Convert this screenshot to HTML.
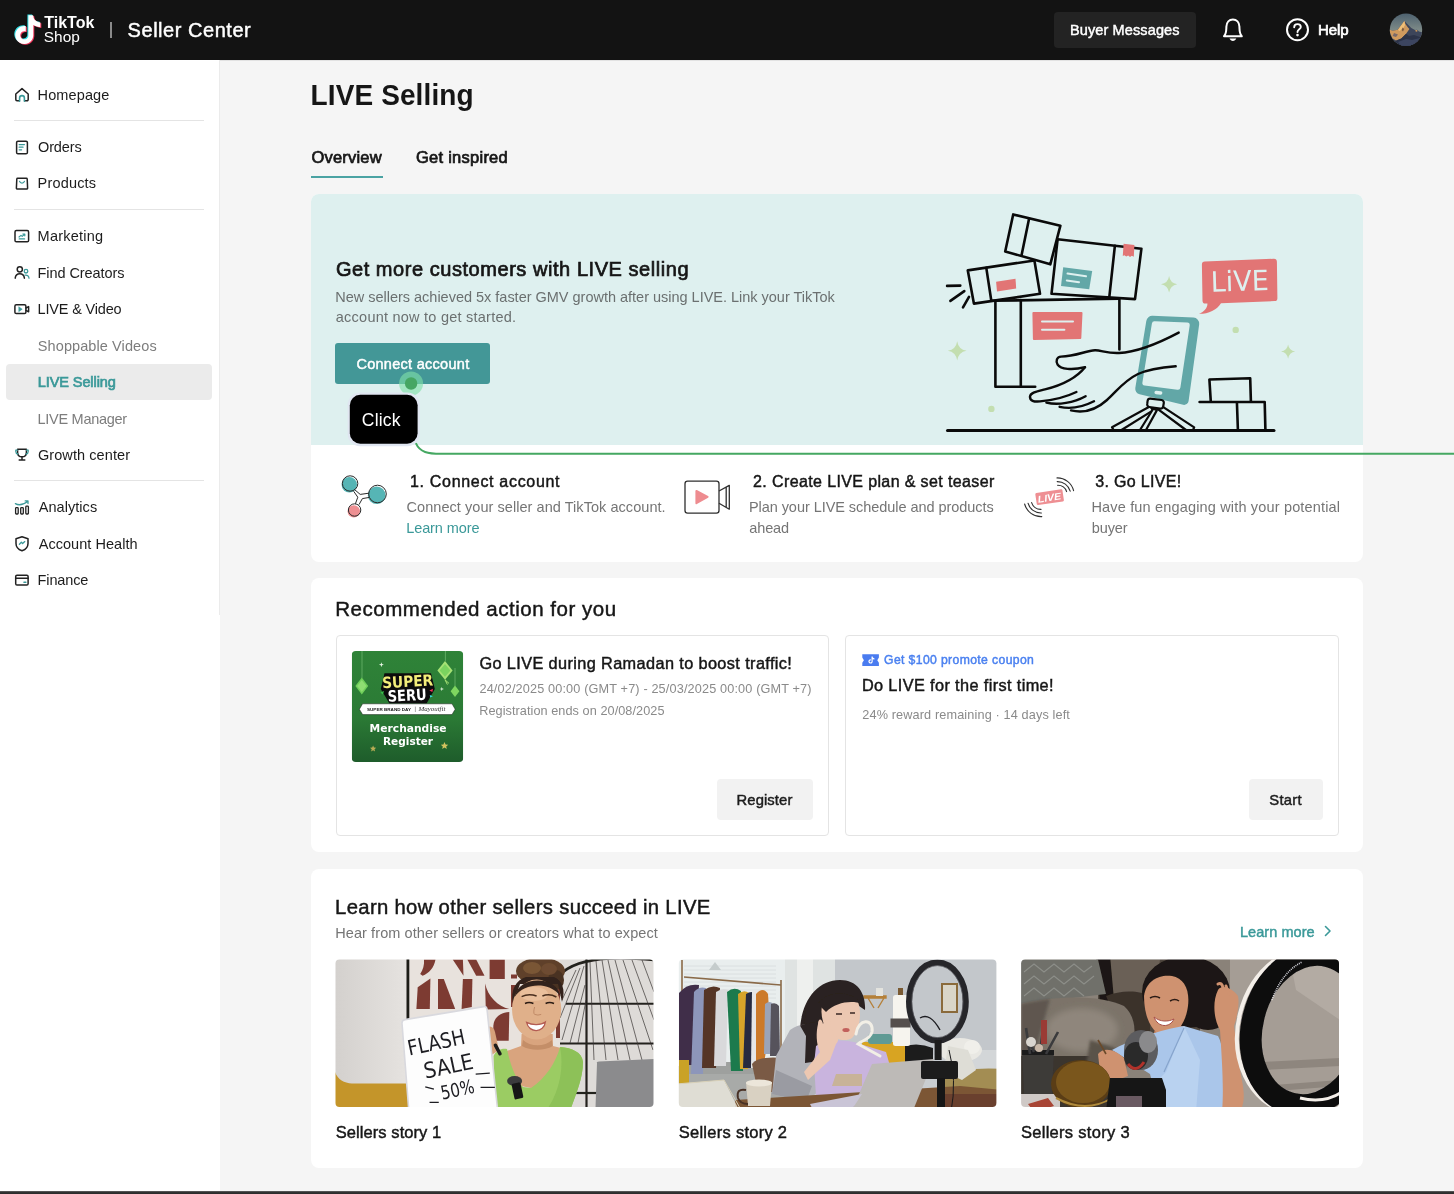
<!DOCTYPE html>
<html lang="en">
<head>
<meta charset="utf-8">
<title>LIVE Selling - Seller Center</title>
<style>
*{box-sizing:border-box;margin:0;padding:0}
html,body{width:1454px;height:1194px;overflow:hidden;background:#f5f5f5;font-family:"Liberation Sans",sans-serif;color:#161616}
body{position:relative}
.a{position:absolute}
.t{position:absolute;white-space:nowrap;line-height:20px}
#hdr{position:absolute;left:0;top:0;width:1454px;height:60px;background:#131313}
#side{position:absolute;left:0;top:60px;width:220px;height:1134px;background:#fff}
#sideb{position:absolute;left:219px;top:60px;width:1px;height:555px;background:#ebebeb}
.sep{position:absolute;left:14px;width:190px;height:1px;background:#e4e4e4}
.card{position:absolute;left:311px;width:1052px;background:#fff;border-radius:8px}
.inner{position:absolute;border:1px solid #e4e4e4;border-radius:4px;background:#fff}
.btn2{position:absolute;background:#f2f2f2;border-radius:4px}
svg{position:absolute;overflow:visible}
</style>
</head>
<body>
<div id="root" style="position:absolute;left:0;top:0;width:1454px;height:1194px;will-change:transform">
<!-- header -->
<div id="hdr"></div>
<div class="a" style="left:0;top:60px;width:1454px;height:1px;background:#e2e2e2"></div>
<div class="a" style="left:110px;top:22px;width:1.5px;height:16px;background:#8a8a8a"></div>
<div class="a" style="left:1054px;top:12px;width:142px;height:36px;background:#232323;border-radius:4px"></div>
<svg style="left:0;top:0" width="1454" height="60" viewBox="0 0 1454 60">
<defs>
<path id="tk" d="M12.525.02c1.31-.02 2.61-.01 3.91-.02.08 1.53.63 3.09 1.75 4.17 1.12 1.11 2.7 1.62 4.24 1.79v4.03c-1.44-.05-2.89-.35-4.2-.97-.57-.26-1.1-.59-1.62-.93-.01 2.92.01 5.84-.02 8.75-.08 1.4-.54 2.79-1.35 3.94-1.31 1.92-3.58 3.17-5.91 3.21-1.43.08-2.86-.31-4.08-1.03-2.02-1.19-3.44-3.37-3.65-5.71-.02-.5-.03-1-.01-1.49.18-1.9 1.12-3.72 2.58-4.96 1.66-1.44 3.98-2.13 6.15-1.72.02 1.48-.04 2.96-.04 4.44-.99-.32-2.15-.23-3.02.37-.63.41-1.11 1.04-1.36 1.75-.21.51-.15 1.07-.14 1.61.24 1.64 1.82 3.02 3.5 2.87 1.12-.01 2.19-.66 2.77-1.61.19-.33.4-.67.41-1.06.1-1.79.06-3.57.07-5.36.01-4.03-.01-8.05.02-12.07z"/>
<clipPath id="avc"><circle cx="1406" cy="29.8" r="16.2"/></clipPath>
<linearGradient id="sky" x1="0" y1="0" x2="0" y2="1"><stop offset="0" stop-color="#4c606e"/><stop offset="0.5" stop-color="#7d8a88"/><stop offset="1" stop-color="#8f9488"/></linearGradient>
</defs>
<!-- tiktok note -->
<g transform="translate(12.4,14.4) scale(1.2)"><use href="#tk" fill="#35e0e6"/></g>
<g transform="translate(14.4,16) scale(1.2)"><use href="#tk" fill="#f0355a"/></g>
<g transform="translate(13.4,15.2) scale(1.2)"><use href="#tk" fill="#fff"/></g>
<text x="44.3" y="28.3" font-family="Liberation Sans, sans-serif" font-weight="bold" font-size="15.6" fill="#fff" textLength="50" lengthAdjust="spacingAndGlyphs">TikTok</text>
<text x="43.8" y="42.2" font-family="Liberation Sans, sans-serif" font-size="15" fill="#fff" textLength="36" lengthAdjust="spacingAndGlyphs">Shop</text>
<!-- bell -->
<g fill="none" stroke="#fff" stroke-width="2" stroke-linejoin="round" stroke-linecap="round">
<path d="M1224 36.2 C1226.6 33.5 1226.2 30 1226.4 26.5 C1226.6 22.2 1229.2 19.5 1232.9 19.5 C1236.6 19.5 1239.2 22.2 1239.4 26.5 C1239.6 30 1239.2 33.5 1241.8 36.2 Z"/>
</g>
<path d="M1229.5 38.6 H1236.3 C1235.6 40.2 1234.4 40.9 1232.9 40.9 C1231.4 40.9 1230.2 40.2 1229.5 38.6 Z" fill="#fff"/>
<!-- help -->
<circle cx="1297.5" cy="29.7" r="10.5" fill="none" stroke="#fff" stroke-width="2"/>
<path d="M1294.2 27.2 C1294.2 25.2 1295.7 24.1 1297.5 24.1 C1299.3 24.1 1300.8 25.2 1300.8 27 C1300.8 29.3 1297.5 29.4 1297.5 32" fill="none" stroke="#fff" stroke-width="1.9" stroke-linecap="round"/>
<circle cx="1297.5" cy="35.1" r="1.3" fill="#fff"/>
<!-- avatar -->
<g clip-path="url(#avc)">
<rect x="1389" y="13" width="34" height="34" fill="url(#sky)"/>
<path d="M1389 31 L1390 29.7 L1392.8 30.8 L1397.6 29.7 L1404.4 21.1 L1411.3 27.9 L1415 30.1 L1417 29.8 L1419 31.4 L1423 32.6 V47 H1389 Z" fill="#3d455a"/>
<path d="M1404.4 21.1 L1405.4 24 L1408 27.6 L1409.4 29 L1406.1 33.8 L1401.3 38.6 L1396 40.4 L1392.5 38.6 L1390 33.1 L1389 31 L1390 29.7 L1392.8 30.8 L1397.6 29.7 Z" fill="#cf9a5e"/>
<path d="M1404.4 21.1 L1405 25 L1403 28.4 L1399.6 31 L1398 30 Z" fill="#f0c078"/>
<path d="M1394 33 L1398 34.4 L1396 37 L1392.6 36 Z" fill="#7a6a6a"/>
<path d="M1402.6 27.6 L1404.2 29 L1403 31.4 L1401.6 30 Z" fill="#7a5a40"/>
<path d="M1415.3 30.1 L1417.2 29.9 L1417.4 31.6 L1415.8 31.8 Z" fill="#c9955a"/>
<path d="M1395 41.2 L1401.3 38.6 L1406.1 33.8 L1409 36 L1414 35 L1423 38 V47 H1400 Z" fill="#2c3348"/>
<path d="M1398 42 L1406 39 L1412 40 L1420 38 L1423 40 V47 H1402 Z" fill="#3c4560"/>
</g>
</svg>

<!-- sidebar -->
<div id="side"></div>
<div id="sideb"></div>
<div class="a" style="left:6px;top:364px;width:206px;height:36px;background:#ebebeb;border-radius:4px"></div>
<div class="sep" style="top:120px"></div>
<div class="sep" style="top:209px"></div>
<div class="sep" style="top:480px"></div>
<svg style="left:0;top:0" width="220" height="620" viewBox="0 0 220 620">
<g fill="none" stroke="#222" stroke-width="1.5" stroke-linejoin="round" stroke-linecap="round">
<!-- home -->
<path d="M15.8 94 L22 88.6 L28.2 94 V99.6 a1.2 1.2 0 0 1 -1.2 1.2 H24.6 M19.4 100.8 H17 a1.2 1.2 0 0 1 -1.2 -1.2 V94"/>
<path d="M19.6 101.2 V98 a2.4 2.4 0 0 1 4.8 0 V101.2" stroke="#3b9999" stroke-width="1.6"/>
<!-- orders -->
<rect x="16.6" y="141.2" width="10.8" height="12.6" rx="1.4"/>
<path d="M19.2 144.6 H24.4 M19.2 147.2 H23 M19.2 149.8 H21.6" stroke="#3b9999" stroke-width="1.3"/>
<!-- products -->
<path d="M17.6 178.3 H26.4 a0.8 0.8 0 0 1 0.8 0.7 L27.6 188 a1 1 0 0 1 -1 1.1 H17.4 a1 1 0 0 1 -1 -1.1 L16.8 179 a0.8 0.8 0 0 1 0.8 -0.7 Z"/>
<path d="M19.6 181.4 C20.3 183.6 23.7 183.6 24.4 181.4" stroke="#3b9999" stroke-width="1.3"/>
<!-- marketing -->
<rect x="15" y="230.5" width="13.6" height="11.3" rx="1.4"/>
<path d="M19 237 L21 235.4 L22.2 236.4 L24.6 234.2 M22.8 234 H24.8 V235.8 M19.2 238.9 H24.6" stroke="#3b9999" stroke-width="1.2"/>
<!-- find creators -->
<circle cx="19.8" cy="269.3" r="2.6"/>
<path d="M15.2 278.2 C15.6 275 17.4 273.8 19.8 273.8 C22.2 273.8 24 275 24.4 278.2"/>
<circle cx="26" cy="271.2" r="1.8" stroke="#3b9999" stroke-width="1.3"/>
<path d="M25 275.2 C27.4 274.8 28.8 276.2 29 278.2" stroke="#3b9999" stroke-width="1.3"/>
<!-- live & video -->
<rect x="14.9" y="304.8" width="11" height="8.8" rx="1.4"/>
<path d="M26 308 L28.6 306.6 V311.8 L26 310.4"/>
<path d="M19 307 L22.2 309.2 L19 311.4 Z" fill="#3b9999" stroke="#3b9999" stroke-width="0.6"/>
<!-- growth center (trophy) -->
<path d="M17.6 449.2 H26.4 V452.4 C26.4 455.2 24.6 456.8 22 456.8 C19.4 456.8 17.6 455.2 17.6 452.4 Z"/>
<path d="M22 456.8 V459.6 M19.2 460 H24.8"/>
<path d="M17.4 450.2 H15.8 V451.6 C15.8 453 16.6 453.8 17.8 454 M26.6 450.2 H28.2 V451.6 C28.2 453 27.4 453.8 26.2 454" stroke="#3b9999" stroke-width="1.3"/>
<!-- analytics -->
<rect x="15.6" y="507.6" width="2.6" height="6.4" rx="0.8" stroke-width="1.3"/>
<rect x="20.7" y="507.6" width="2.6" height="6.4" rx="0.8" stroke-width="1.3"/>
<rect x="25.8" y="506.2" width="2.6" height="7.8" rx="0.8" stroke-width="1.3"/>
<path d="M15.4 503.6 C18.4 505.4 23.4 504.6 27.6 501.4 M25.2 500.9 L28 500.9 L28 503.6" stroke="#3b9999" stroke-width="1.3"/>
<!-- account health -->
<path d="M22 536.8 L28 538.8 V543.4 C28 547 25.6 549.4 22 550.8 C18.4 549.4 16 547 16 543.4 V538.8 Z"/>
<path d="M19.4 544.2 L21.4 542.2 L22.6 543.6 L24.8 541.6" stroke="#3b9999" stroke-width="1.3"/>
<!-- finance -->
<rect x="15.7" y="575.3" width="12.4" height="9.8" rx="1.3"/>
<path d="M15.7 578.2 H28.1"/>
<path d="M24 582.2 H25.8" stroke="#3b9999" stroke-width="1.6"/>
</g>
</svg>

<!-- tabs underline -->
<div class="a" style="left:311px;top:175.5px;width:72px;height:2.5px;background:#4aa3a3"></div>
<!-- hero -->
<div class="card" style="top:193.5px;height:368.5px"></div>
<div class="a" style="left:311px;top:193.5px;width:1052px;height:251px;background:#def0ef;border-radius:8px 8px 0 0"></div>
<div class="a" style="left:335px;top:343px;width:155px;height:41px;background:#439797;border-radius:3px"></div>
<svg style="left:0;top:0" width="1454" height="460" viewBox="0 0 1454 460">
<g fill="none" stroke="#0a0a0a" stroke-width="2.6" stroke-linejoin="round" stroke-linecap="round">
<!-- ground -->
<path d="M947.5 430.4 H1274" stroke-width="3"/>
<!-- big box -->
<path d="M995.4 301 V386.7 H1035.2 M1020.8 300 V386.7 M1119.4 299 V349.4"/>
<path d="M991 300.8 L1119 298.6"/>
<!-- top tilted box -->
<path d="M1013.2 214.4 L1060.4 225.7 L1050.3 264.3 L1005.2 251.4 Z"/>
<path d="M1029.1 218.6 L1021.5 255.6"/>
<!-- right box -->
<path d="M1057.6 239.3 L1141.4 248.7 L1135 299.1 L1051.5 293.8 Z"/>
<path d="M1114.9 245.7 L1109.3 297.2"/>
<!-- left box -->
<path d="M967.8 270.4 L1034.4 260.5 L1040 293.8 L973.9 303.6 Z"/>
<path d="M986.3 267.9 L991.3 300.8"/>
<!-- spark lines -->
<path d="M947.1 285.9 L960.3 285.6 M950.4 300.9 L964.3 291.1 M963 307.4 L969 296.8"/>
<!-- small boxes right -->
<path d="M1210.8 401.6 L1209.4 379.5 L1250.2 378.2 L1250.9 401.6"/>
<path d="M1199.6 402 H1264.7 L1265.4 430 M1236.9 402 L1237.9 430"/>
</g>
<!-- labels -->
<path d="M1123.6 243.8 L1134.4 245 L1133.8 256.8 L1131.8 255.8 L1130 257 L1128.2 255.6 L1126.2 256.6 L1124.4 255.2 L1122.8 256 Z" fill="#e27575"/>
<path d="M1063.2 267.3 L1092.2 271.1 L1089.2 289.3 L1061 285.9 Z" fill="#62a7a7"/>
<path d="M1067.5 273.6 L1086 276.3 M1066.8 280.4 L1079 282.2" stroke="#def0ef" stroke-width="2" stroke-linecap="round"/>
<path d="M996.1 281.7 L1015.5 278.7 L1016.2 288.5 L997 291.5 Z" fill="#e27575"/>
<path d="M1033.4 312 H1081.5 a1 1 0 0 1 1 1 L1081.3 338 a1 1 0 0 1 -1 1 L1033.9 340 a1 1 0 0 1 -1 -1 L1032.4 313 a1 1 0 0 1 1 -1 Z" fill="#e27575"/>
<path d="M1042 321.5 H1073 M1042 329.7 H1064.4" stroke="#def0ef" stroke-width="2" stroke-linecap="round"/>
<!-- sparkles -->
<g fill="#c3deb0">
<path d="M957.2 341.2 Q958.4 349.4 966.6 350.7 Q958.4 352 957.2 360.6 Q956 352 947.8 350.7 Q956 349.4 957.2 341.2 Z"/>
<path d="M1169.1 276 Q1170.2 283.2 1177.2 284.2 Q1170.2 285.3 1169.1 292.6 Q1168 285.3 1161 284.2 Q1168 283.2 1169.1 276 Z"/>
<path d="M1288.1 344.4 Q1289.1 350.6 1295.2 351.5 Q1289.1 352.4 1288.1 358.8 Q1287.1 352.4 1281 351.5 Q1287.1 350.6 1288.1 344.4 Z"/>
<circle cx="991.4" cy="408.9" r="3.2"/>
<circle cx="1235.7" cy="329.9" r="3.2"/>
</g>
<!-- LIVE bubble -->
<path d="M1204.8 261.6 L1273.8 258.8 a3 3 0 0 1 3.1 2.9 L1277.4 298 a3 3 0 0 1 -2.9 3.1 L1221 303.2 C1217 310 1208 314 1199 313.8 C1204.5 311.5 1207.6 307.5 1207.4 303.6 L1205.6 303.6 a3 3 0 0 1 -3.1 -2.9 L1201.9 264.7 a3 3 0 0 1 2.9 -3.1 Z" fill="#e27575"/>
<g transform="rotate(-1.8 1240 280)" font-family="DejaVu Sans, Liberation Sans, sans-serif" fill="#def0ef">
<text x="1210.6" y="290.8" font-size="28" textLength="58" lengthAdjust="spacingAndGlyphs">LiVE</text>
</g>
<!-- phone -->
<path d="M1152.5 315.8 L1193.5 317.6 a6 6 0 0 1 5.7 6.6 L1188.6 401 a4.5 4.5 0 0 1 -5.4 3.8 L1139.6 394.2 a5.5 5.5 0 0 1 -4.3 -6.2 L1146.3 320.9 a6 6 0 0 1 6.2 -5.1 Z" fill="#62a7a7"/>
<path d="M1154.6 321.2 L1187.2 322.5 a2.6 2.6 0 0 1 2.5 2.9 L1180.4 387.6 a2.6 2.6 0 0 1 -3 2.2 L1144.6 385.6 a2.6 2.6 0 0 1 -2.2 -3 L1151.9 323.4 a2.6 2.6 0 0 1 2.7 -2.2 Z" fill="#def0ef"/>
<rect x="1154.4" y="391" width="8" height="3.4" rx="1.7" fill="#def0ef" transform="rotate(6 1158.4 392.7)"/>
<!-- tripod -->
<g fill="#def0ef" stroke="#0a0a0a" stroke-width="2.2" stroke-linejoin="round" stroke-linecap="round">
<path d="M1150.2 406.2 L1112 427.2 L1113.6 430 L1121.5 430 L1153 410.4 Z"/>
<path d="M1153.4 408.5 L1140 430 L1146 430 L1156.8 410.4 Z"/>
<path d="M1157.2 408.6 L1186 430 L1193 430 L1194.2 427.4 L1161.4 405.8 Z"/>
<path d="M1150.4 398.6 L1161.6 400 a2.6 2.6 0 0 1 2.2 3 L1163.2 406.4 a2.6 2.6 0 0 1 -3 2.2 L1149.4 407 a2.6 2.6 0 0 1 -2.2 -3 L1147.6 400.8 a2.6 2.6 0 0 1 2.8 -2.2 Z"/>
</g>
<!-- hand -->
<g fill="none" stroke="#0a0a0a" stroke-width="2.4" stroke-linejoin="round" stroke-linecap="round">
<path d="M1085.2 367.2 C1081 367 1076 361 1056.5 357.6 C1054 362.5 1056 366.6 1061 368.4 C1068 370.6 1078 369.6 1085.2 367.2 Z" fill="#def0ef" stroke="none"/>
<path d="M1178.7 332.6 C1160 342.5 1139 352 1119 353 C1107 353.6 1101 350 1095 350.2 C1086 350.6 1076 356.4 1061 356.6 C1056.6 356.8 1055.6 361.4 1057.6 364.6 C1060.6 369.2 1072 370.4 1085 367.2"/>
<path d="M1085 367.2 C1078 376 1064 384.6 1045 389.4 C1037 391.4 1030.4 392.4 1030 396.4 C1029.6 400.8 1034 402 1040 401.4 C1054 400.2 1066 397 1076.4 392"/>
<path d="M1046.4 402.6 C1058 405.6 1074 402.6 1085.6 396.2"/>
<path d="M1059.6 406.8 C1071 409.4 1083 406.8 1094 401.2"/>
<path d="M1071 410.4 C1084 413.6 1097 409 1107 400 C1117 391 1124 380.6 1138 374 C1150 368.6 1163 367.4 1175.7 366.3"/>
</g>
</svg>

<svg style="left:0;top:0" width="1454" height="570" viewBox="0 0 1454 570">
<!-- step 1: connect nodes -->
<g>
<circle cx="349.3" cy="484.8" r="7.7" fill="#56b5b5"/>
<circle cx="376.7" cy="495.3" r="8.8" fill="#56b5b5"/>
<circle cx="353.8" cy="511.4" r="6.2" fill="#ee8f92"/>
<path d="M354.6 489.6 L360.2 494.4 L369 493.2 M353.6 491.2 L357.8 497.2 L355.4 503.8 M369.4 497.4 L362.4 498.6 L359 504.6" fill="none" stroke="#2a2a2a" stroke-width="1" stroke-linejoin="round"/>
<circle cx="350.1" cy="483.5" r="7.7" fill="none" stroke="#2a2a2a" stroke-width="1"/>
<circle cx="377.5" cy="494" r="8.8" fill="none" stroke="#2a2a2a" stroke-width="1"/>
<circle cx="354.6" cy="510" r="6.2" fill="none" stroke="#2a2a2a" stroke-width="1"/>
</g>
<!-- step 2: camera -->
<g fill="none" stroke="#2f2f2f" stroke-width="1.3" stroke-linejoin="round">
<rect x="685" y="481.2" width="34" height="32" rx="2.6"/>
<path d="M719 491 L729.3 485.4 V509.2 L719 503.3 M726.2 487.2 V507.4"/>
<path d="M696.4 491 L707.6 496.9 L696.4 503.2 Z" fill="#ee8c90" stroke="#ee8c90" stroke-width="2"/>
</g>
<!-- step 3: live -->
<g fill="none" stroke="#2f2f2f" stroke-width="1.1" stroke-linecap="round">
<path d="M1057 477.9 A16.8 16.8 0 0 1 1073.6 490.6"/>
<path d="M1057.2 481.6 A13.2 13.2 0 0 1 1070.2 491.2"/>
<path d="M1057.6 485.3 A9.4 9.4 0 0 1 1066.6 491.6"/>
<path d="M1041.8 516.6 A17 17 0 0 1 1024.6 504"/>
<path d="M1041.4 513 A13.4 13.4 0 0 1 1028 503.2"/>
<path d="M1041 509.4 A9.6 9.6 0 0 1 1031.6 502.6"/>
</g>
<g transform="rotate(-8.5 1049.6 497.2)">
<rect x="1035.9" y="491.1" width="27.4" height="12.2" rx="1.2" fill="#ee8f93"/>
<text x="1037.6" y="501" font-family="Liberation Sans, sans-serif" font-weight="bold" font-style="italic" font-size="9.6" fill="#fff" textLength="23.5" lengthAdjust="spacingAndGlyphs">LIVE</text>
</g>
</svg>

<!-- click overlay -->
<svg style="left:0;top:0" width="1454" height="1194" viewBox="0 0 1454 1194">
<path d="M415.8 443.2 C 420 452.5 428 453.8 441 453.8 L 1454 453.8" fill="none" stroke="#45a862" stroke-width="2"/>
<circle cx="411.1" cy="383.5" r="12" fill="#7fe0a8" fill-opacity="0.62"/>
<circle cx="411.1" cy="383.5" r="6.2" fill="#46a663"/>
<rect x="347.6" y="392.6" width="72.2" height="53.6" rx="12.5" fill="#e0e6f1"/>
<rect x="349.8" y="394.8" width="67.8" height="48.9" rx="10.5" fill="#000"/>
</svg>
<!-- card 2 -->
<div class="card" style="top:578px;height:274px"></div>
<div class="inner" style="left:335.5px;top:635px;width:493.5px;height:200.5px"></div>
<div class="inner" style="left:845px;top:635px;width:494px;height:200.5px"></div>
<div class="btn2" style="left:717px;top:779px;width:96px;height:41px"></div>
<div class="btn2" style="left:1249px;top:779px;width:74px;height:41px"></div>
<svg style="left:0;top:0" width="1454" height="860" viewBox="0 0 1454 860">
<defs>
<linearGradient id="pg" x1="0" y1="0" x2="0" y2="1"><stop offset="0" stop-color="#2f8338"/><stop offset="0.6" stop-color="#2b7a35"/><stop offset="1" stop-color="#1e5c2b"/></linearGradient>
<clipPath id="pc"><rect x="351.8" y="651" width="111.4" height="111" rx="4"/></clipPath>
</defs>
<g clip-path="url(#pc)">
<rect x="351.8" y="651" width="111.4" height="111" fill="url(#pg)"/>
<!-- strings -->
<path d="M362 651 V678 M445.4 651 V661 M455 668 V686" stroke="#8fd18a" stroke-width="0.5" fill="none"/>
<!-- ketupat -->
<path d="M361.8 677.6 L368.2 686 L361.8 694.4 L355.4 686 Z" fill="#6fcf5a"/>
<path d="M361.8 680 L366.4 686 L361.8 692 L357.2 686 Z" fill="#9be27c" fill-opacity="0.7"/>
<path d="M445 661 L452.6 670.4 L445 679.8 L437.4 670.4 Z" fill="#a6e275"/>
<path d="M445 664 L450.4 670.4 L445 676.8 L439.6 670.4 Z" fill="#6fcf5a" fill-opacity="0.8"/>
<path d="M445 679.8 L447.4 684.6 M445 679.8 L449 683.4" stroke="#a6e275" stroke-width="1" fill="none"/>
<path d="M455 685.4 L459.4 691.2 L455 697 L450.6 691.2 Z" fill="#7fd660"/>
<!-- sparkles -->
<path d="M381.4 662.2 L382 664.1 L383.9 664.7 L382 665.3 L381.4 667.2 L380.8 665.3 L378.9 664.7 L380.8 664.1 Z" fill="#e9f7e6"/>
<path d="M441.8 686.8 L442.3 688.5 L444 689 L442.3 689.5 L441.8 691.2 L441.3 689.5 L439.6 689 L441.3 688.5 Z" fill="#e9f7e6"/>
<!-- black plaque -->
<path d="M384.5 673.3 L431 673.3 L434.8 689 L426.6 703.6 L389.4 703.6 L380.8 689 Z" fill="#0c0c0c"/>
<text x="382" y="686.9" font-family="DejaVu Sans, Liberation Sans, sans-serif" font-weight="bold" font-size="15.5" fill="#f3ee7a" textLength="51" lengthAdjust="spacingAndGlyphs" transform="rotate(-3 407 680)">SUPER</text>
<text x="387.6" y="700.8" font-family="DejaVu Sans, Liberation Sans, sans-serif" font-weight="bold" font-size="15.5" fill="#ffffff" textLength="39" lengthAdjust="spacingAndGlyphs" transform="rotate(-3 407 694)">SERU</text>
<path d="M380.5 692.5 l3.5 -1.5 l-1.2 3.4 Z" fill="#38c04a"/><path d="M429.4 690.6 l3.6 -1.8 l-0.6 3.2 Z" fill="#f0355a"/><path d="M429.8 695 l3 1.2 l-2.6 1.4 Z" fill="#35e0e6"/>
<!-- white banner -->
<path d="M362.6 703.8 H452 L455.2 709.2 L452 714.6 H362.6 L359.4 709.2 Z" fill="#fff" stroke="#1a1a1a" stroke-width="0.5"/>
<text x="367" y="710.8" font-family="Liberation Sans, sans-serif" font-weight="bold" font-size="4.4" fill="#1a1a1a" textLength="44" lengthAdjust="spacingAndGlyphs">SUPER BRAND DAY</text>
<path d="M415.4 706.6 V712" stroke="#333" stroke-width="0.4"/>
<text x="418.4" y="711.2" font-family="Liberation Serif, serif" font-style="italic" font-size="6" fill="#333" textLength="27" lengthAdjust="spacingAndGlyphs">Mayoutfit</text>
<text x="369.6" y="732" font-family="DejaVu Sans, Liberation Sans, sans-serif" font-weight="bold" font-size="10.6" fill="#fff" textLength="77" lengthAdjust="spacingAndGlyphs">Merchandise</text>
<text x="383" y="744.6" font-family="DejaVu Sans, Liberation Sans, sans-serif" font-weight="bold" font-size="10.6" fill="#fff" textLength="50" lengthAdjust="spacingAndGlyphs">Register</text>
<!-- gold stars -->
<path d="M373.1 745.6 L374 747.6 L376.2 747.8 L374.5 749.2 L375.1 751.4 L373.1 750.2 L371.1 751.4 L371.7 749.2 L370 747.8 L372.2 747.6 Z" fill="#b9ad55"/>
<path d="M444.5 742 L445.6 744.4 L448.2 744.7 L446.2 746.4 L446.8 749 L444.5 747.6 L442.2 749 L442.8 746.4 L440.8 744.7 L443.4 744.4 Z" fill="#d2c35e"/>
</g>
<!-- coupon icon -->
<path d="M862.3 654.2 H878.9 V657.6 L877.3 660.15 L878.9 662.7 V666.1 H862.3 V662.7 L863.9 660.15 L862.3 657.6 Z" fill="#4a7cf0"/>
<g transform="translate(867.9,656.6) scale(0.29)"><path fill="#fff" d="M12.525.02c1.31-.02 2.61-.01 3.91-.02.08 1.53.63 3.09 1.75 4.17 1.12 1.11 2.7 1.62 4.24 1.79v4.03c-1.44-.05-2.89-.35-4.2-.97-.57-.26-1.1-.59-1.62-.93-.01 2.92.01 5.84-.02 8.75-.08 1.4-.54 2.79-1.35 3.94-1.31 1.92-3.58 3.17-5.91 3.21-1.43.08-2.86-.31-4.08-1.03-2.02-1.19-3.44-3.37-3.65-5.71-.02-.5-.03-1-.01-1.49.18-1.9 1.12-3.72 2.58-4.96 1.66-1.44 3.98-2.13 6.15-1.72.02 1.48-.04 2.96-.04 4.44-.99-.32-2.15-.23-3.02.37-.63.41-1.11 1.04-1.36 1.75-.21.51-.15 1.07-.14 1.61.24 1.64 1.82 3.02 3.5 2.87 1.12-.01 2.19-.66 2.77-1.61.19-.33.4-.67.41-1.06.1-1.79.06-3.57.07-5.36.01-4.03-.01-8.05.02-12.07z"/></g>
</svg>

<!-- card 3 -->
<div class="card" style="top:868.5px;height:299px"></div>
<svg style="left:0;top:0" width="1454" height="1194" viewBox="0 0 1454 1194">
<defs>
<clipPath id="ph1"><rect x="335.5" y="959.5" width="318" height="147.5" rx="4"/></clipPath>
<clipPath id="ph2"><rect x="678.8" y="959.5" width="317.6" height="147.5" rx="4"/></clipPath>
<clipPath id="ph3"><rect x="1021.1" y="959.5" width="317.9" height="147.5" rx="4"/></clipPath>
<filter id="b1" x="-5%" y="-5%" width="110%" height="110%"><feGaussianBlur stdDeviation="0.7"/></filter>
<filter id="b2" x="-10%" y="-10%" width="120%" height="120%"><feGaussianBlur stdDeviation="1.6"/></filter>
<filter id="b3" x="-20%" y="-20%" width="140%" height="140%"><feGaussianBlur stdDeviation="3"/></filter>
<linearGradient id="w1" x1="0" y1="0" x2="1" y2="0"><stop offset="0" stop-color="#d2cfcc"/><stop offset="1" stop-color="#e6e3e0"/></linearGradient>
</defs>
<g clip-path="url(#ph1)">
<g filter="url(#b1)">
<rect x="330" y="955" width="330" height="157" fill="#e4e0dc"/>
<rect x="330" y="955" width="78" height="157" fill="url(#w1)"/>
<!-- art frame + rust shapes -->
<rect x="409.3" y="955" width="172" height="100" fill="#e8e2dd"/>
<rect x="406.5" y="955" width="2.8" height="64" fill="#1c1a19"/>
<g fill="#7d3b33">
<path d="M424 959.5 H435.5 C434 968 429 973 422.6 975.8 L420.2 974 C423 970 424.5 965 424 959.5 Z"/>
<path d="M452.7 959.5 H462.9 L463.5 975.8 L461 972 Z"/>
<path d="M467.3 959.5 H476.2 L484.5 975.8 H476.2 Z"/>
<path d="M489.6 959.5 H504.8 V979 H489.6 Z"/>
<path d="M511 974.5 h6 v4 h-6 Z"/>
<path d="M417.7 987.3 L430.4 978.4 L429.8 1008.9 H416.4 Z"/>
<path d="M438 979 H443.8 L455.2 1008.9 H438 Z"/>
<path d="M462.9 979 H472.4 L471.8 1007 L461.6 1008.9 Z"/>
<path d="M485.1 983.4 C487.6 996 498 1006.4 509.3 1008.9 L485.8 1009.5 Z"/>
<path d="M509.3 1012 L508.7 1040.7 H492.8 L493.4 1025.4 C494 1017 501 1012.6 509.3 1012 Z"/>
<path d="M511 985 h5 v22 h-5 Z"/>
<path d="M562 962 h8 v14 h-8 Z"/><path d="M557 986 l12 0 l3 18 h-13 Z"/><path d="M556 1012 h12 l-4 26 h-8 Z"/>
</g>
<!-- chair region -->
<rect x="560" y="955" width="100" height="157" fill="#dedbd8"/>
<g stroke="#24201f" fill="none">
<path d="M563 972 C580 958 615 956 654 960" stroke-width="2.6"/>
<path d="M586.5 959 V1107" stroke-width="2.2"/>
<path d="M566 1003.8 H654" stroke-width="2"/><path d="M560 1043.5 H654" stroke-width="2"/><path d="M575 1093 H600" stroke-width="2.2"/>
<g stroke-width="0.7" stroke="#3a3533">
<path d="M590 962 L594 1060 M596 961 L606 1060 M602 960 L618 1060 M608 960 L630 1060 M615 960 L642 1060 M623 960 L653 1050 M632 960 L654 1020 M642 960 L654 992"/>
<path d="M584 966 L562 1040 M580 968 L560 1018 M576 970 L562 1000 M585 985 L570 1043 M586 1000 L578 1043"/>
</g>
</g>
<!-- grey pillow -->
<path d="M597 1063 Q596 1061.5 599 1061.5 L654 1059 V1108 H595.5 Z" fill="#8b8b8d"/>
<!-- yellow couch -->
<path d="M335 1072 C338 1080 344 1083 352 1083.5 H410 V1108 H335 Z" fill="#c4952a"/>
<!-- hair -->
<ellipse cx="540.5" cy="971" rx="24.5" ry="13.5" fill="#5e4029"/><ellipse cx="556" cy="980" rx="8" ry="10" fill="#4a3222"/>
<ellipse cx="532" cy="968" rx="9" ry="6" fill="#7a5636"/><ellipse cx="549" cy="969" rx="8" ry="6" fill="#6e4c30"/>
<path d="M513 1004 C510 990 516 980 526 977 L554 977 C562 980 566 990 562 1002 L558 984 L520 984 Z" fill="#33221a"/>
<!-- neck/chest -->
<path d="M521.6 1034 H552.7 L553 1046 L561 1048 L566 1060 L540 1090 L512 1084 L504 1052 L521 1046 Z" fill="#d9a47e"/>
<path d="M523 1040 C530 1047 545 1047 552 1040 L552.7 1046 C545 1051 530 1051 522 1046 Z" fill="#c48e68"/>
<!-- face -->
<ellipse cx="536.6" cy="1009.6" rx="24.6" ry="30" fill="#e0b08a"/>
<ellipse cx="534" cy="994" rx="14" ry="7" fill="#ecc3a0" fill-opacity="0.8"/>
<path d="M514.5 997 C517 986 526 980.5 538 980.5 C550 980.5 558 986 560.5 996 C554 988 546 985.5 538 985.5 C529 985.5 520 989 514.5 997 Z" fill="#33221a"/>
<path d="M521.6 996.6 q7 -3.6 15 -0.6 M542.4 996 q7 -3 14 1" stroke="#4a2e1e" stroke-width="1.5" fill="none"/>
<path d="M525 1003.4 q4 -1.8 8.4 0 M545.6 1003.4 q4 -1.8 8.4 0" stroke="#2a1a12" stroke-width="1.6" fill="none"/>
<path d="M526.6 1022.4 C532 1025.4 541 1025.4 545.4 1022 C544 1033 529 1033.6 526.6 1022.4 Z" fill="#fff"/>
<path d="M526.6 1022.4 C532 1025.4 541 1025.4 545.4 1022 C544 1033 529 1033.6 526.6 1022.4 Z" fill="none" stroke="#b45c52" stroke-width="1.3"/>
<path d="M534.6 1007 q-1.6 6 0 7.4 q3.4 1.4 6.6 0" stroke="#c08a66" stroke-width="1" fill="none"/>
<!-- green top -->
<path d="M493.6 1056 C496 1050 502 1048 507 1049 C510 1064 516 1080 523 1087 L531 1088 C546 1078 556 1062 560 1047 C572 1048 582 1052 583 1062 C583 1078 576 1094 571 1108 H495 Z" fill="#9bcc64"/>
<path d="M560 1047 C572 1048 582 1052 583 1062 C583 1078 576 1094 571 1108 H548 C560 1090 564 1066 560 1047 Z" fill="#8dc158"/>
<!-- mic -->
<ellipse cx="514.6" cy="1081" rx="7.5" ry="5" fill="#3a3a3c"/>
<rect x="513" y="1083" width="9" height="16" rx="1.5" fill="#151517" transform="rotate(-12 517 1091)"/>
<!-- hand holding board -->
<path d="M486 1030 C488 1024 494 1026 495 1032 L499 1050 L490 1056 Z" fill="#d6a07a"/>
<rect x="496" y="1043" width="3.4" height="13" rx="1.5" fill="#1a1a1a" transform="rotate(-28 497.7 1049.5)"/>
<!-- whiteboard -->
<path d="M405 1019.6 L483.6 1006.6 Q486.6 1006.2 487 1009.2 L497.4 1108 H408.6 L402 1023.2 Q401.8 1020.2 405 1019.6 Z" fill="#fdfdfd" stroke="#d9d9de" stroke-width="1.6"/>
</g>
<g font-family="DejaVu Sans, Liberation Sans, sans-serif" fill="#1d1d22" transform="rotate(-12 445 1050)">
<text x="409" y="1048" font-size="21" textLength="58" lengthAdjust="spacingAndGlyphs">FLASH</text>
<text x="420" y="1074" font-size="22" textLength="50" lengthAdjust="spacingAndGlyphs">SALE</text>
<text x="432" y="1098" font-size="19" textLength="34" lengthAdjust="spacingAndGlyphs">50%</text>
<path d="M470 1080 l14 2 M472 1094 l14 3 M426 1086 l-8 -4 M428 1100 l-9 -2" stroke="#1d1d22" stroke-width="1.2" fill="none"/>
</g>
</g>

<g clip-path="url(#ph2)">
<g filter="url(#b1)">
<rect x="673" y="955" width="330" height="157" fill="#c9cdd0"/>
<!-- window / left bright -->
<rect x="673" y="955" width="112" height="120" fill="#e9eeee"/>
<g stroke="#d5dbdc" stroke-width="0.8"><path d="M684 966 H776 M684 970 H776 M684 974 H776 M684 978 H776 M684 982 H776 M684 986 H776 M684 990 H776 M684 994 H776 M684 998 H776"/></g>
<path d="M709 970 l6 -8 l6 8 Z" fill="#c5cccc"/>
<!-- curtain & wall center -->
<rect x="785" y="955" width="50" height="90" fill="#dfe3e2"/>
<rect x="797" y="955" width="16" height="80" fill="#eef0ee"/>
<rect x="835" y="955" width="168" height="100" fill="#c3c7cb"/>
<!-- floor -->
<path d="M673 1066 H790 V1112 H673 Z" fill="#a8aaa8"/>
<path d="M684 1062 h70 v12 h-70 Z" fill="#9ea09e"/>
<!-- rack -->
<path d="M682 960 V1060 M781 980 V1055" stroke="#8a6a48" stroke-width="1.6"/>
<path d="M684 977 L781 985" stroke="#8a6a48" stroke-width="1.6"/>
<!-- clothes -->
<path d="M679 993 q8 -10 20 -8 l-4 80 h-16 Z" fill="#3f2f48"/>
<path d="M679 1060 h10 v24 h-10 Z" fill="#c9a227"/>
<path d="M694 992 q5 -6 12 -4 l-3 86 h-12 Z" fill="#8d96ba"/>
<path d="M704 990 q8 -6 16 -2 l-4 80 h-14 Z" fill="#543628"/>
<path d="M716 992 q6 -4 12 -2 l-2 76 h-12 Z" fill="#d9d9db"/>
<path d="M727 992 q7 -6 14 -1 l2 80 h-12 Z" fill="#1c7a4d"/>
<path d="M738 994 q6 -5 11 -1 l-1 76 h-8 Z" fill="#d6a42c"/>
<path d="M746 994 q6 -4 10 0 l-1 74 h-12 Z" fill="#262b40"/>
<path d="M752 992 q5 -4 8 0 l-1 76 h-8 Z" fill="#e6e6e6"/>
<path d="M756 994 q7 -8 12 0 l2 30 l-6 40 h-8 Z" fill="#cc7a2a"/>
<path d="M765 1004 q5 -4 8 0 l-1 50 h-8 Z" fill="#9ba4b8"/>
<path d="M771 1004 q5 -2 8 2 l1 50 h-10 Z" fill="#56525c"/>
<!-- shelf / frames -->
<path d="M864 996 h22 v2 h-22 Z M868 998 l6 10 M884 998 l-6 10" stroke="#b5803a" stroke-width="1.4" fill="#b5803a"/>
<rect x="876" y="988" width="7" height="8" fill="#e3e3de"/>
<rect x="941" y="983" width="17" height="30" fill="#8a6a3a"/><rect x="943" y="985" width="13" height="26" fill="#d9d5c8"/>
<rect x="898" y="988" width="5" height="8" fill="#7a5a32"/>
<!-- bed / teddy / yellow box / black bag -->
<path d="M945 1050 h58 v62 h-58 Z" fill="#d3d6d8"/>
<path d="M945 1075 q20 -8 58 -6 v30 h-58 Z" fill="#a38d52"/>
<ellipse cx="960" cy="1050" rx="22" ry="12" fill="#e9e8e3"/><ellipse cx="972" cy="1047" rx="8" ry="7" fill="#f0efea"/>
<path d="M948 1046 l20 4 l8 20 l-14 10 l-18 -8 Z" fill="#deddd6"/>
<rect x="862" y="1042" width="44" height="22" fill="#d8a422"/>
<path d="M905 1046 q14 -4 28 2 v16 h-28 Z" fill="#1c1c1e"/>
<rect x="868" y="1034" width="24" height="10" rx="3" fill="#5e9a94"/>
<!-- chair back -->
<path d="M752 1064 q6 -8 30 -6 v34 h-24 Z" fill="#7a5a44"/>
<!-- hair -->
<path d="M800 1040 C798 1005 815 980 840 980 C858 980 866 994 865 1010 L850 1000 L828 1004 L818 1050 L810 1066 L796 1066 Z" fill="#2a2120"/>
<path d="M806 1010 C804 1030 800 1050 798 1066 L812 1068 C816 1050 822 1030 826 1010 Z" fill="#2a2120"/>
<!-- face -->
<path d="M822 1006 C826 996 848 994 858 1002 C862 1012 860 1030 852 1038 C846 1042 836 1040 830 1034 C824 1028 820 1016 822 1006 Z" fill="#ecc7b1"/>
<path d="M818 1004 C824 992 850 988 862 1004 C852 1000 836 1002 826 1012 Z" fill="#2a2120"/>
<path d="M836 1014 h6 M850 1013 h5" stroke="#3a2a24" stroke-width="1.3"/>
<ellipse cx="846" cy="1030" rx="3.6" ry="2" fill="#c2605c"/>
<!-- gray shirt -->
<path d="M790 1030 C800 1022 812 1024 818 1030 L812 1060 L820 1090 L806 1102 L772 1094 L776 1056 Z" fill="#b2b3b9"/>
<path d="M776 1070 L812 1086 L806 1102 L772 1094 Z" fill="#9a9ba2"/>
<path d="M800 1025.4 L818.3 1021 L821 1030 L813.7 1061.7 L805 1063 L806 1036 Z" fill="#2a2120"/>
<!-- purple shirt -->
<path d="M816 1046 C830 1038 850 1040 860 1044 L886 1052 L890 1066 L872 1066 L862 1092 L816 1096 L814 1064 Z" fill="#c9b4de"/>
<path d="M836 1074 h26 v12 h-30 Z" fill="#c8b27a" fill-opacity="0.7"/>
<!-- hand -->
<path d="M818 1024 C818 1018 822 1018 823 1024 L826 1020 C828 1016 831 1018 830 1024 L834 1036 C838 1036 840 1040 836 1044 L830 1060 L808 1080 L804 1072 L820 1052 C816 1044 816 1032 818 1024 Z" fill="#ecc7b1"/>
<!-- hanger -->
<path d="M856 1034 C858 1018 874 1018 872 1032 C870 1040 862 1040 858 1044 L880 1056" stroke="#f2efe6" stroke-width="3" fill="none" stroke-linecap="round"/>
<!-- table -->
<path d="M735 1100 L960 1086 L1003 1090 V1112 H735 Z" fill="#7b5636"/>
<path d="M945 1094 h58 v18 h-58 Z" fill="#6b3f2e"/>
<!-- basket / cloth -->
<path d="M676 1084 L724 1080 L740 1112 H676 Z" fill="#e9e6dc" fill-opacity="0.85"/>
<path d="M676 1084 L724 1080 L740 1108" stroke="#d8d0b8" stroke-width="1" fill="none"/>
<!-- cup -->
<path d="M746 1082 h26 l-2 24 h-22 Z" fill="#d9d1c2"/><ellipse cx="759" cy="1083" rx="13" ry="3.4" fill="#ece6da"/>
<path d="M746 1090 q-10 -2 -8 8 q2 6 10 6" stroke="#4a3226" stroke-width="2" fill="none"/>
<!-- laptop -->
<path d="M872 1064 L934 1059 L914 1108 L853 1108 Z" fill="#bdbab7"/>
<path d="M810 1104 L862 1094 L853 1108 H812 Z" fill="#c9c4d6"/>
<!-- phone + ring light -->
<rect x="893" y="995" width="17" height="51" rx="2.5" fill="#f6f4ee"/>
<rect x="890.5" y="1018.5" width="20" height="9" fill="#55504e"/>
<ellipse cx="937.4" cy="1001.6" rx="28.4" ry="39" fill="none" stroke="#26262b" stroke-width="6"/>
<ellipse cx="937.4" cy="1001.6" rx="25.6" ry="36" fill="none" stroke="#5a5a60" stroke-width="0.8"/>
<path d="M920 1018 q10 -6 20 12" stroke="#1c1c20" stroke-width="1.4" fill="none"/>
<rect x="934.6" y="1040" width="7" height="20" fill="#1a1a1c"/>
<rect x="921" y="1061" width="37" height="18" rx="2" fill="#1c1c1e"/>
<rect x="937" y="1078" width="8" height="34" fill="#141416"/>
<path d="M949 1050 q8 30 2 62" stroke="#1a1a1c" stroke-width="1" fill="none"/>
</g>
</g>

<g clip-path="url(#ph3)">
<g filter="url(#b1)">
<rect x="1016" y="955" width="330" height="157" fill="#8a8279"/>
<!-- back cushion center -->
<path d="M1098 955 H1200 V1040 H1098 Z" fill="#4e453d"/>
<path d="M1108 959.5 H1160 L1156 992 L1112 1000 Z" fill="#6a6056"/>
<path d="M1096 955 H1110 L1114 1000 L1100 1004 Z" fill="#1c1612"/>
<path d="M1106 996 C1120 990 1140 990 1150 996 L1150 1040 L1120 1030 Z" fill="#3a312b"/>
<!-- chevron pillow -->
<path d="M1021 959.5 H1098 L1106 994 L1021 1004 Z" fill="#6f706b"/>
<path d="M1024 972 l10 -8 l10 8 l10 -8 l10 8 l10 -8 l10 8 l8 -6 M1024 984 l10 -8 l10 8 l10 -8 l10 8 l10 -8 l10 8 l10 -8 M1024 996 l10 -8 l10 8 l10 -8 l10 8 l10 -8 l10 8" stroke="#8d8e88" stroke-width="1.2" fill="none"/>
<!-- left cushion -->
<path d="M1021 1004 C1050 996 1100 994 1124 1006 C1140 1020 1138 1050 1116 1064 L1021 1070 Z" fill="#7b7369"/>
<ellipse cx="1082" cy="1030" rx="36" ry="22" fill="#8f867c" filter="url(#b3)"/>
<path d="M1021 1004 C1030 1002 1040 1000 1050 999 L1030 1070 H1021 Z" fill="#5e574f" filter="url(#b2)"/>
<path d="M1021 1056 H1118 V1112 H1021 Z" fill="#3a342e"/>
<path d="M1090 1040 C1110 1046 1124 1050 1132 1060 L1120 1072 L1086 1066 Z" fill="#5a524a" filter="url(#b2)"/>
<!-- right couch -->
<path d="M1230 955 H1346 V1112 H1230 Z" fill="#a59d95"/>
<path d="M1290 959.5 H1340 V1020 L1296 990 Z" fill="#b3aba3"/>
<path d="M1262 1062 L1340 1058 V1066 L1264 1070 Z" fill="#8e867e"/>
<path d="M1262 1086 L1340 1080 V1086 L1264 1092 Z" fill="#8e867e"/>
<!-- hair -->
<ellipse cx="1186" cy="992" rx="44" ry="36" fill="#1d1614"/>
<ellipse cx="1208" cy="1006" rx="24" ry="24" fill="#1d1614"/>
<!-- neck -->
<path d="M1156 1026 H1184 L1186 1046 L1166 1070 L1150 1046 Z" fill="#bd7f5c"/>
<!-- face -->
<path d="M1144 996 C1146 980 1160 974 1172 976 C1184 978 1190 990 1188 1006 C1186 1022 1178 1034 1166 1036 C1154 1036 1144 1020 1144 996 Z" fill="#cf9270"/>
<path d="M1150 998 q5 -3 10 0 M1170 1001 q5 -3 9 0" stroke="#2a1a14" stroke-width="1.5" fill="none"/>
<path d="M1154 1017 C1160 1022 1168 1022 1174 1019 C1170 1028 1158 1028 1154 1017 Z" fill="#fff" stroke="#a8504a" stroke-width="1"/>
<!-- blouse -->
<path d="M1112 1050 C1130 1040 1160 1030 1184 1026 L1218 1036 C1226 1050 1226 1090 1224 1112 H1160 L1150 1074 L1128 1060 Z" fill="#aac6ea"/>
<path d="M1184 1026 L1166 1072 L1156 1082 L1160 1112 H1196 L1200 1060 Z" fill="#b9d2f0"/>
<path d="M1184 1028 L1164 1072" stroke="#86a4cc" stroke-width="1.2" fill="none"/>
<!-- right arm -->
<path d="M1218 990 C1222 984 1232 988 1238 996 C1240 1006 1236 1020 1234 1026 L1240 1070 C1244 1090 1246 1100 1240 1112 H1222 C1224 1090 1222 1060 1220 1030 C1214 1020 1212 1002 1218 990 Z" fill="#cf9270"/>
<path d="M1218 984 q4 -2 5 4 M1226 986 l3 8" stroke="#cf9270" stroke-width="3" stroke-linecap="round" fill="none"/>
<!-- left hand + brush -->
<path d="M1098 1054 C1104 1046 1116 1050 1124 1058 L1128 1076 L1112 1082 L1100 1072 Z" fill="#cf9270"/>
<path d="M1098 1040 l8 14" stroke="#6a4a2a" stroke-width="1.6"/>
<!-- brushes cup -->
<path d="M1022 1050 h32 l-2 44 h-28 Z" fill="#3c3a39"/><path d="M1022 1050 h32 v5 h-32 Z" fill="#1c1c1e"/>
<path d="M1030 1054 l-4 -26 M1040 1052 l4 -30 M1046 1054 l12 -22 M1034 1052 l-6 -14" stroke="#3a3a3c" stroke-width="2.6" fill="none"/>
<rect x="1041" y="1020" width="6" height="24" fill="#9a3a34"/>
<circle cx="1031" cy="1042" r="5" fill="#d9d5cf"/><circle cx="1039" cy="1048" r="4" fill="#c9b8a8"/>
<path d="M1021 1094 H1060 V1112 H1021 Z" fill="#cfc9c6"/>
<path d="M1028 1104 l20 -6 l6 8 l-20 6 Z" fill="#a84434"/>
<!-- mirror -->
<ellipse cx="1081" cy="1084" rx="30" ry="24" fill="#5a3e16"/>
<ellipse cx="1083" cy="1082" rx="27" ry="21" fill="#7a571e"/>
<path d="M1056 1098 q30 16 56 0" stroke="#b08a3a" stroke-width="2" fill="none"/>
<!-- camera + mic -->
<path d="M1110 1078 h52 l4 12 v22 h-60 Z" fill="#141414"/>
<ellipse cx="1141" cy="1050" rx="17" ry="20" fill="#5c5c5e"/>
<ellipse cx="1136" cy="1056" rx="12" ry="14" fill="#2a2a2c"/>
<ellipse cx="1148" cy="1042" rx="9" ry="11" fill="#8a8a8c"/>
<path d="M1128 1064 q8 10 16 -2" stroke="#b0302a" stroke-width="3" fill="none"/>
<rect x="1116" y="1096" width="26" height="16" fill="#6a5a62"/>
</g>
<!-- ring light -->
<g filter="url(#b1)">
<ellipse cx="1306" cy="1030" rx="68" ry="84" fill="none" stroke="#f4efe9" stroke-width="4" transform="rotate(14 1306 1030)"/>
<ellipse cx="1310" cy="1030" rx="58" ry="76" fill="none" stroke="#0d0d0f" stroke-width="22" transform="rotate(14 1310 1030)"/>
<path d="M1272 1000 Q1282 972 1302 962" stroke="#d9d9de" stroke-width="1.6" stroke-dasharray="1 1" fill="none"/>
<path d="M1300 1098 Q1324 1104 1342 1092" stroke="#f4efe9" stroke-width="3" fill="none"/>
</g>
</g>

</svg>

<svg style="left:1322px;top:924px" width="12" height="14" viewBox="0 0 12 14"><path d="M3.5 2.5 L8 7 L3.5 11.5" fill="none" stroke="#3b9999" stroke-width="1.6" stroke-linecap="round" stroke-linejoin="round"/></svg>
<div class="t" style="left:127.60px;top:19.97px;font-size:20px;color:#ffffff;-webkit-text-stroke:0.45px #ffffff;letter-spacing:0.536px;">Seller Center</div>
<div class="t" style="left:1069.96px;top:19.98px;font-size:14.5px;color:#ffffff;-webkit-text-stroke:0.45px #ffffff;letter-spacing:0.122px;">Buyer Messages</div>
<div class="t" style="left:1318.06px;top:19.80px;font-size:15px;color:#ffffff;-webkit-text-stroke:0.7px #ffffff;letter-spacing:-0.114px;">Help</div>
<div class="t" style="left:37.60px;top:84.58px;font-size:14.5px;color:#1c1c1c;letter-spacing:0.109px;">Homepage</div>
<div class="t" style="left:38.03px;top:136.88px;font-size:14.5px;color:#1c1c1c;letter-spacing:-0.139px;">Orders</div>
<div class="t" style="left:37.60px;top:173.28px;font-size:14.5px;color:#1c1c1c;letter-spacing:0.180px;">Products</div>
<div class="t" style="left:37.60px;top:226.18px;font-size:14.5px;color:#1c1c1c;letter-spacing:0.214px;">Marketing</div>
<div class="t" style="left:37.60px;top:263.48px;font-size:14.5px;color:#1c1c1c;letter-spacing:-0.082px;">Find Creators</div>
<div class="t" style="left:37.60px;top:298.78px;font-size:14.5px;color:#1c1c1c;letter-spacing:-0.179px;">LIVE &amp; Video</div>
<div class="t" style="left:37.81px;top:335.98px;font-size:14.5px;color:#7d7d7d;letter-spacing:0.095px;">Shoppable Videos</div>
<div class="t" style="left:37.72px;top:372.18px;font-size:14.5px;color:#3b9999;-webkit-text-stroke:0.7px #3b9999;letter-spacing:-0.078px;">LIVE Selling</div>
<div class="t" style="left:37.60px;top:409.48px;font-size:14.5px;color:#7d7d7d;letter-spacing:-0.293px;">LIVE Manager</div>
<div class="t" style="left:37.93px;top:444.78px;font-size:14.5px;color:#1c1c1c;letter-spacing:0.082px;">Growth center</div>
<div class="t" style="left:38.70px;top:497.18px;font-size:14.5px;color:#1c1c1c;letter-spacing:0.055px;">Analytics</div>
<div class="t" style="left:38.70px;top:533.98px;font-size:14.5px;color:#1c1c1c;letter-spacing:0.042px;">Account Health</div>
<div class="t" style="left:37.60px;top:569.78px;font-size:14.5px;color:#1c1c1c;letter-spacing:-0.128px;">Finance</div>
<div class="t" style="left:310.62px;top:86.30px;font-size:28px;color:#161616;font-weight:bold;letter-spacing:0.106px;transform:scaleY(1.05);transform-origin:0 19.7px;">LIVE Selling</div>
<div class="t" style="left:311.55px;top:146.68px;font-size:16.5px;color:#161616;-webkit-text-stroke:0.7px #161616;letter-spacing:0.185px;">Overview</div>
<div class="t" style="left:415.99px;top:146.68px;font-size:16.5px;color:#161616;-webkit-text-stroke:0.7px #161616;letter-spacing:0.253px;">Get inspired</div>
<div class="t" style="left:335.88px;top:259.07px;font-size:20px;color:#161616;-webkit-text-stroke:0.7px #161616;letter-spacing:0.549px;">Get more customers with LIVE selling</div>
<div class="t" style="left:335.23px;top:287.08px;font-size:14.5px;color:#6b7070;letter-spacing:-0.012px;">New sellers achieved 5x faster GMV growth after using LIVE. Link your TikTok</div>
<div class="t" style="left:335.81px;top:307.28px;font-size:14.5px;color:#6b7070;letter-spacing:0.238px;">account now to get started.</div>
<div class="t" style="left:356.42px;top:353.68px;font-size:14.5px;color:#ffffff;-webkit-text-stroke:0.45px #ffffff;letter-spacing:0.282px;">Connect account</div>
<div class="t" style="left:361.83px;top:409.64px;font-size:17.5px;color:#ffffff;letter-spacing:0.192px;">Click</div>
<div class="t" style="left:409.96px;top:472.46px;font-size:16px;color:#161616;-webkit-text-stroke:0.45px #161616;letter-spacing:0.690px;">1. Connect account</div>
<div class="t" style="left:406.59px;top:497.08px;font-size:14.5px;color:#757575;letter-spacing:0.051px;">Connect your seller and TikTok account.</div>
<div class="t" style="left:406.23px;top:517.98px;font-size:14.5px;color:#3b9999;letter-spacing:-0.097px;">Learn more</div>
<div class="t" style="left:753.08px;top:472.46px;font-size:16px;color:#161616;-webkit-text-stroke:0.45px #161616;letter-spacing:0.379px;">2. Create LIVE plan &amp; set teaser</div>
<div class="t" style="left:748.88px;top:497.08px;font-size:14.5px;color:#757575;letter-spacing:-0.051px;">Plan your LIVE schedule and products</div>
<div class="t" style="left:749.30px;top:517.98px;font-size:14.5px;color:#757575;letter-spacing:-0.122px;">ahead</div>
<div class="t" style="left:1095.35px;top:472.46px;font-size:16px;color:#161616;-webkit-text-stroke:0.45px #161616;letter-spacing:0.316px;">3. Go LIVE!</div>
<div class="t" style="left:1091.43px;top:497.08px;font-size:14.5px;color:#757575;letter-spacing:0.167px;">Have fun engaging with your potential</div>
<div class="t" style="left:1091.63px;top:517.98px;font-size:14.5px;color:#757575;letter-spacing:-0.052px;">buyer</div>
<div class="t" style="left:335.22px;top:598.50px;font-size:20.5px;color:#161616;-webkit-text-stroke:0.45px #161616;letter-spacing:0.525px;">Recommended action for you</div>
<div class="t" style="left:479.40px;top:653.15px;font-size:16.3px;color:#161616;-webkit-text-stroke:0.45px #161616;letter-spacing:0.386px;">Go LIVE during Ramadan to boost traffic!</div>
<div class="t" style="left:479.47px;top:678.60px;font-size:12.7px;color:#8a8a8a;letter-spacing:0.142px;">24/02/2025 00:00 (GMT +7) - 25/03/2025 00:00 (GMT +7)</div>
<div class="t" style="left:479.25px;top:700.90px;font-size:12.7px;color:#8a8a8a;letter-spacing:0.060px;">Registration ends on 20/08/2025</div>
<div class="t" style="left:736.59px;top:790.07px;font-size:14.8px;color:#1c1c1c;-webkit-text-stroke:0.45px #1c1c1c;letter-spacing:0.091px;">Register</div>
<div class="t" style="left:884.05px;top:649.77px;font-size:12.2px;color:#4a80f0;-webkit-text-stroke:0.45px #4a80f0;letter-spacing:0.374px;">Get $100 promote coupon</div>
<div class="t" style="left:861.89px;top:674.75px;font-size:16.3px;color:#161616;-webkit-text-stroke:0.45px #161616;letter-spacing:0.378px;">Do LIVE for the first time!</div>
<div class="t" style="left:862.26px;top:705.40px;font-size:12.7px;color:#8a8a8a;letter-spacing:0.132px;">24% reward remaining · 14 days left</div>
<div class="t" style="left:1269.26px;top:790.07px;font-size:14.8px;color:#1c1c1c;-webkit-text-stroke:0.45px #1c1c1c;letter-spacing:0.258px;">Start</div>
<div class="t" style="left:335.09px;top:896.87px;font-size:20.3px;color:#161616;-webkit-text-stroke:0.45px #161616;letter-spacing:0.320px;">Learn how other sellers succeed in LIVE</div>
<div class="t" style="left:335.23px;top:922.98px;font-size:14.5px;color:#757575;letter-spacing:0.087px;">Hear from other sellers or creators what to expect</div>
<div class="t" style="left:1239.92px;top:921.78px;font-size:14.5px;color:#3b9999;-webkit-text-stroke:0.45px #3b9999;letter-spacing:0.068px;">Learn more</div>
<div class="t" style="left:335.77px;top:1122.08px;font-size:16.5px;color:#161616;-webkit-text-stroke:0.45px #161616;letter-spacing:0.068px;">Sellers story 1</div>
<div class="t" style="left:678.69px;top:1122.08px;font-size:16.5px;color:#161616;-webkit-text-stroke:0.45px #161616;letter-spacing:0.273px;">Sellers story 2</div>
<div class="t" style="left:1020.95px;top:1122.08px;font-size:16.5px;color:#161616;-webkit-text-stroke:0.45px #161616;letter-spacing:0.292px;">Sellers story 3</div>
<div class="a" style="left:0;top:1191px;width:1454px;height:3px;background:linear-gradient(#6a6a6a,#333 40%,#2a2a2a)"></div>
</div>
</body>
</html>
